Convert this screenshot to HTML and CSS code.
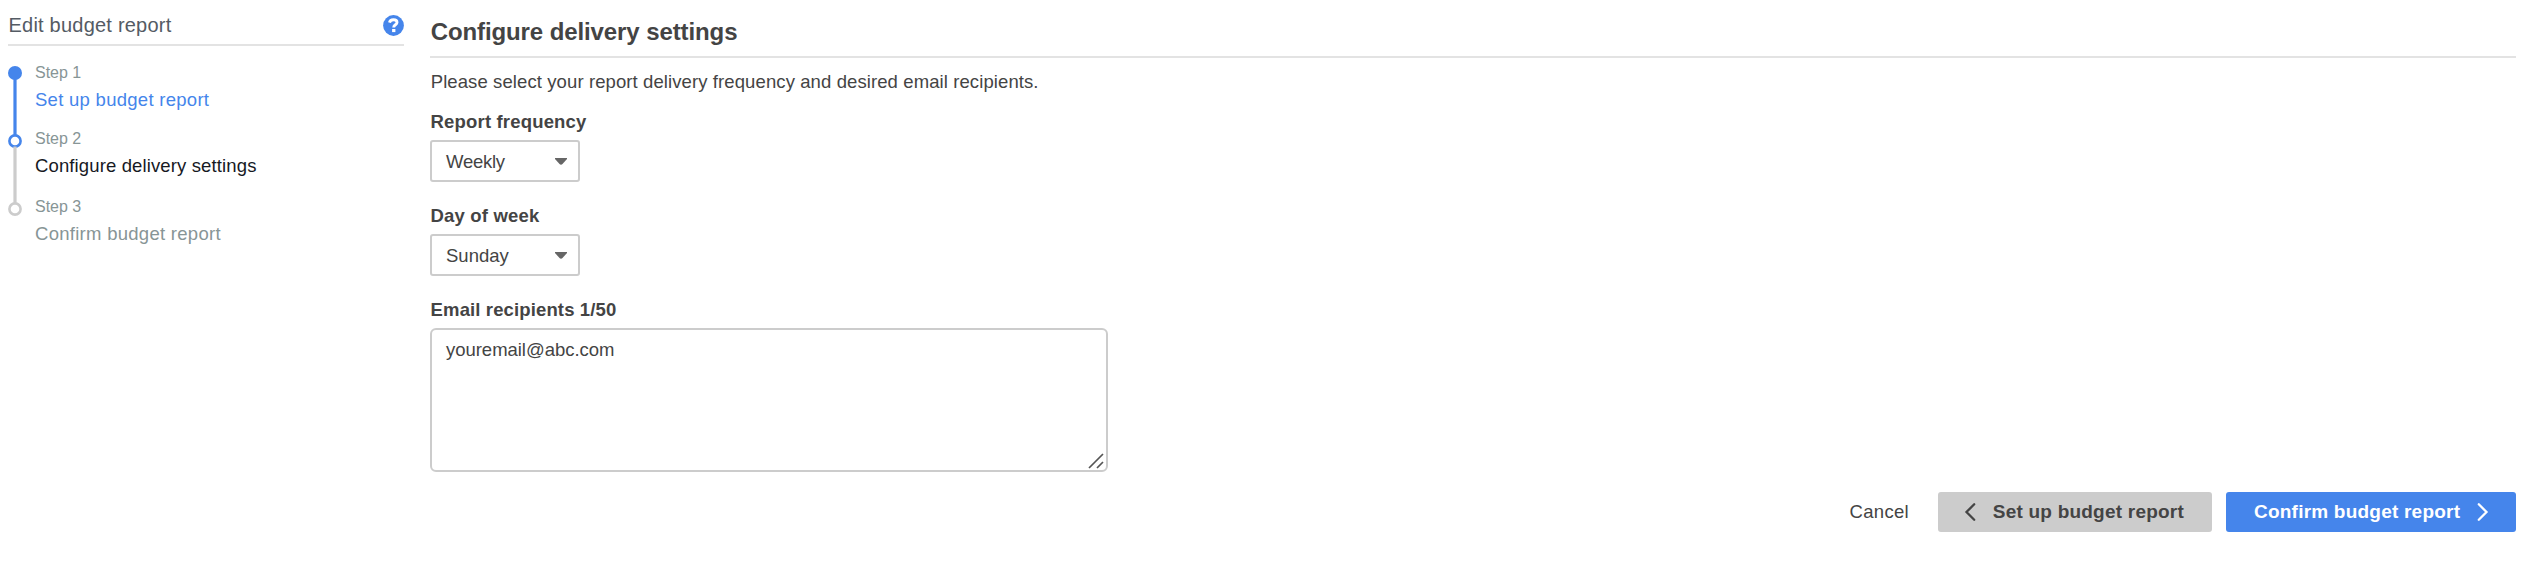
FILE: index.html
```html
<!DOCTYPE html>
<html lang="en">
<head>
<meta charset="utf-8">
<title>Edit budget report</title>
<link rel="stylesheet" href="styles.css">
</head>
<body>
<div class="layout">
  <aside class="sidebar">
    <header class="sidebar-head">
      <span class="sidebar-title">Edit budget report</span>
      <svg class="help" width="21" height="21" viewBox="0 0 21 21" role="img" aria-label="Help"><circle cx="10.5" cy="10.5" r="10.4" fill="#4585eb"/><path d="M6.5 7.6C6.9 5.6 8.3 4.7 10.4 4.7c2.2 0 3.6 1 3.6 2.7 0 2.3-3.3 2.4-3.3 5" fill="none" stroke="#fff" stroke-width="2.9"/><rect x="9.1" y="14" width="3.3" height="3.1" fill="#fff"/></svg>
    </header>
    <div class="progress">
      <svg class="rail" width="14" height="150" viewBox="0 0 14 150" aria-hidden="true">
        <rect x="5.4" y="7" width="3.2" height="62" fill="#4585eb"/>
        <circle cx="7" cy="7" r="7" fill="#4585eb"/>
        <circle cx="7" cy="75" r="5.6" fill="#fff" stroke="#4585eb" stroke-width="2.6"/>
        <rect x="5.4" y="80.5" width="3.2" height="57" fill="#ccc"/>
        <circle cx="7" cy="143" r="5.6" fill="#fff" stroke="#ccc" stroke-width="2.6"/>
      </svg>
      <ol class="steps">
        <li class="step"><span class="step-no">Step 1</span><a class="step-name done">Set up budget report</a></li>
        <li class="step"><span class="step-no">Step 2</span><span class="step-name current">Configure delivery settings</span></li>
        <li class="step"><span class="step-no">Step 3</span><span class="step-name">Confirm budget report</span></li>
      </ol>
    </div>
  </aside>
  <main class="main">
    <h1 class="heading">Configure delivery settings</h1>
    <p class="intro">Please select your report delivery frequency and desired email recipients.</p>
    <div class="field">
      <div class="label">Report frequency</div>
      <div class="select"><span class="weekly">Weekly</span><svg class="caret" width="12" height="7" viewBox="0 0 12 7"><path d="M0 0H12V1L7.5 6Q6 7.4 4.5 6L0 1Z" fill="#666"/></svg></div>
    </div>
    <div class="field">
      <div class="label">Day of week</div>
      <div class="select"><span>Sunday</span><svg class="caret" width="12" height="7" viewBox="0 0 12 7"><path d="M0 0H12V1L7.5 6Q6 7.4 4.5 6L0 1Z" fill="#666"/></svg></div>
    </div>
    <div class="field">
      <div class="label label-email">Email recipients 1/50</div>
      <div class="textarea"><span class="email">youremail@abc.com</span><svg class="grip" width="16" height="16" viewBox="0 0 16 16"><path d="M1 15 15 1M9 15l6-6" stroke="#555" stroke-width="1.7" fill="none"/></svg></div>
    </div>
    <footer class="actions">
      <a class="cancel">Cancel</a>
      <div class="button back"><svg width="12" height="18" viewBox="0 0 12 18"><path d="M10.2 1.3 2.5 9l7.7 7.7" fill="none" stroke="#444" stroke-width="2.3" stroke-linecap="round"/></svg><span class="button-text">Set up budget report</span></div>
      <div class="button next"><span class="button-text">Confirm budget report</span><svg width="12" height="18" viewBox="0 0 12 18"><path d="M1.8 1.3 9.5 9l-7.7 7.7" fill="none" stroke="#fff" stroke-width="2.3" stroke-linecap="round"/></svg></div>
    </footer>
  </main>
</div>
</body>
</html>
```
FILE: styles.css
```css
* { box-sizing: border-box; }
body {
  margin: 0;
  background: #fff;
  color: #444;
  font: 18.5px/27px "Liberation Sans", Arial, Helvetica, sans-serif;
}
.layout { display: flex; gap: 26px; padding: 0 20px 0 8px; }
.sidebar { width: 396px; flex: none; }
.sidebar-head {
  display: flex;
  justify-content: space-between;
  align-items: flex-start;
  height: 46px;
  padding-top: 11px;
  border-bottom: 2px solid #e3e3e3;
}
.sidebar-title { padding-left: 0.5px; color: #545b64; font-size: 20px; line-height: 28px; letter-spacing: 0.22px; }
.help { margin: 4px 0 0; }
.progress { display: flex; gap: 13px; padding-top: 20px; }
.rail { flex: none; overflow: visible; }
.steps { list-style: none; margin: -7px 0 0; padding: 0; }
.step { display: flex; flex-direction: column; height: 66px; }
.step:nth-child(2) { height: 68px; }
.step-no { font-size: 16px; color: #879596; }
.step-name { color: #879596; letter-spacing: 0.28px; }
.step-name.done { color: #4585eb; }
.step-name.current { color: #16191f; letter-spacing: 0.13px; }
.main { flex: 1; }
.heading {
  height: 58px;
  margin: 0;
  padding: 18px 0 0 0.7px;
  border-bottom: 2px solid #e3e3e3;
  font-size: 24px;
  line-height: 27px;
  letter-spacing: -0.1px;
}
.intro { height: 38px; margin: 0 0 12px; padding: 10px 0 0 0.7px; letter-spacing: 0.1px; }
.field { margin-bottom: 20px; }
.label { padding-left: 0.6px; font-weight: 700; height: 28px; margin-bottom: 4px; letter-spacing: 0.17px; }
.label-email { letter-spacing: 0.13px; }
.select {
  display: flex;
  align-items: center;
  justify-content: space-between;
  width: 150px;
  height: 42px;
  padding: 0 11px 0 14px;
  border: 2px solid #ccc;
  border-radius: 3px;
}
.weekly { letter-spacing: -0.25px; }
.caret { margin-top: 1px; }
.textarea {
  display: flex;
  justify-content: space-between;
  width: 678px;
  height: 144px;
  padding: 6px 2px 1px 14px;
  border: 2px solid #ccc;
  border-radius: 6px;
}
.email { letter-spacing: -0.03px; }
.grip { align-self: flex-end; }
.actions { display: flex; justify-content: flex-end; align-items: center; height: 40px; }
.cancel { margin: 0 29px 1px 0; letter-spacing: 0.3px; }
.button {
  display: flex;
  align-items: center;
  justify-content: space-between;
  height: 40px;
  border-radius: 3px;
  font-size: 19px;
  font-weight: 700;
  letter-spacing: 0.22px;
}
.button-text { margin-bottom: 1px; }
.back { width: 274px; padding: 0 28px 0 26px; margin-right: 14px; background: #ccc; }
.next { width: 290px; padding: 0 27px 0 28px; background: #4585eb; color: #fff; }
```
